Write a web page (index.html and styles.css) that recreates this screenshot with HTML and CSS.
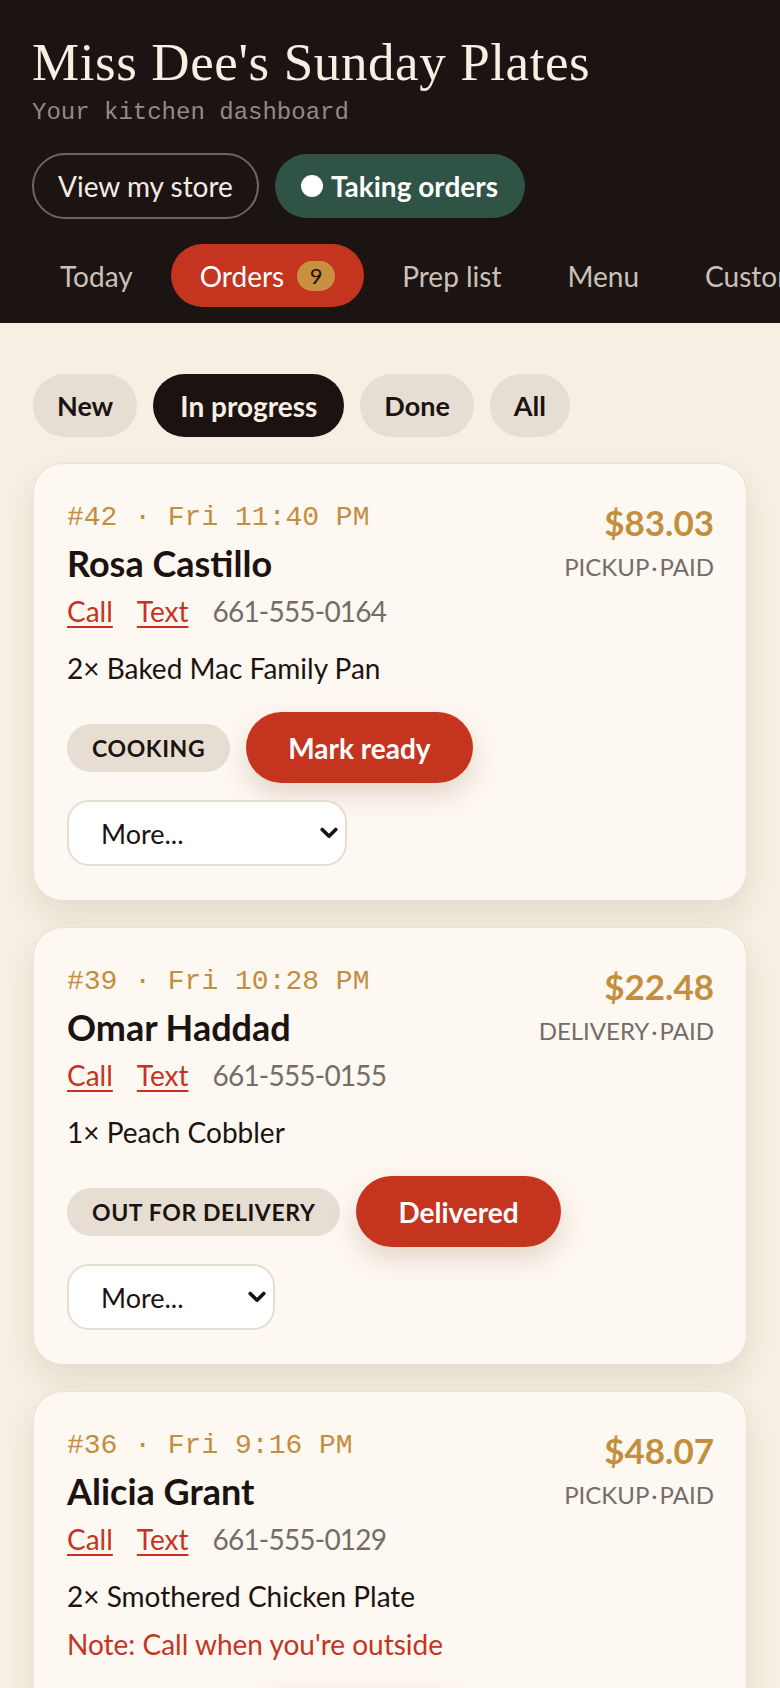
FILE: index.html
```html
<!DOCTYPE html>
<html lang="en">
<head>
<meta charset="utf-8">
<title>Miss Dee's Sunday Plates — Dashboard</title>
<link rel="stylesheet" href="styles.css">
</head>
<body>
<header class="header">
  <h1 class="title">Miss Dee's Sunday Plates</h1>
  <p class="subtitle">Your kitchen dashboard</p>
  <div class="header-actions">
    <a class="btn-outline" href="#">View my store</a>
    <button class="btn-open" type="button"><span class="dot"></span>Taking orders</button>
  </div>
  <nav class="nav">
    <a class="nav-item" href="#">Today</a>
    <a class="nav-item active" href="#">Orders <span class="badge">9</span></a>
    <a class="nav-item" href="#">Prep list</a>
    <a class="nav-item" href="#">Menu</a>
    <a class="nav-item" href="#">Customers</a>
  </nav>
</header>

<main class="main">
  <div class="filters">
    <button class="chip" type="button">New</button>
    <button class="chip active" type="button">In progress</button>
    <button class="chip" type="button">Done</button>
    <button class="chip" type="button">All</button>
  </div>

  <section class="cards">
    <article class="card">
      <div class="card-head">
        <div class="card-main">
          <div class="meta">#42 · Fri 11:40 PM</div>
          <h2 class="name">Rosa Castillo</h2>
          <div class="contact"><a href="#">Call</a><a href="#">Text</a><span class="phone">661-555-0164</span></div>
          <div class="items">2× Baked Mac Family Pan</div>
        </div>
        <div class="card-side">
          <div class="price">$83.03</div>
          <div class="kind">PICKUP<span class="sep">·</span>PAID</div>
        </div>
      </div>
      <div class="actions">
        <span class="status">COOKING</span>
        <button class="btn-primary" type="button">Mark ready</button>
      </div>
      <div class="select-wrap sel-wide">
        <select class="more"><option>More...</option><option>Mark picked up</option><option>Cancel order</option></select>
        <svg class="chev" viewBox="0 0 18 12" aria-hidden="true"><path d="M2.2 2.4 9 9.2 15.8 2.4" fill="none" stroke="#1c1311" stroke-width="3.6" stroke-linecap="round" stroke-linejoin="round"/></svg>
      </div>
    </article>

    <article class="card">
      <div class="card-head">
        <div class="card-main">
          <div class="meta">#39 · Fri 10:28 PM</div>
          <h2 class="name">Omar Haddad</h2>
          <div class="contact"><a href="#">Call</a><a href="#">Text</a><span class="phone">661-555-0155</span></div>
          <div class="items">1× Peach Cobbler</div>
        </div>
        <div class="card-side">
          <div class="price">$22.48</div>
          <div class="kind">DELIVERY<span class="sep">·</span>PAID</div>
        </div>
      </div>
      <div class="actions">
        <span class="status">OUT FOR DELIVERY</span>
        <button class="btn-primary" type="button">Delivered</button>
      </div>
      <div class="select-wrap sel-narrow">
        <select class="more"><option>More...</option><option>Refund</option></select>
        <svg class="chev" viewBox="0 0 18 12" aria-hidden="true"><path d="M2.2 2.4 9 9.2 15.8 2.4" fill="none" stroke="#1c1311" stroke-width="3.6" stroke-linecap="round" stroke-linejoin="round"/></svg>
      </div>
    </article>

    <article class="card">
      <div class="card-head">
        <div class="card-main">
          <div class="meta">#36 · Fri 9:16 PM</div>
          <h2 class="name">Alicia Grant</h2>
          <div class="contact"><a href="#">Call</a><a href="#">Text</a><span class="phone">661-555-0129</span></div>
          <div class="items">2× Smothered Chicken Plate</div>
          <div class="note">Note: Call when you're outside</div>
        </div>
        <div class="card-side">
          <div class="price">$48.07</div>
          <div class="kind">PICKUP<span class="sep">·</span>PAID</div>
        </div>
      </div>
      <div class="actions">
        <span class="status">COOKING</span>
        <button class="btn-primary" type="button">Mark ready</button>
      </div>
      <div class="select-wrap sel-wide">
        <select class="more"><option>More...</option></select>
        <svg class="chev" viewBox="0 0 18 12" aria-hidden="true"><path d="M2.2 2.4 9 9.2 15.8 2.4" fill="none" stroke="#1c1311" stroke-width="3.6" stroke-linecap="round" stroke-linejoin="round"/></svg>
      </div>
    </article>
  </section>
</main>
</body>
</html>
```

FILE: styles.css
```css
* { box-sizing: border-box; }

body {
  margin: 0;
  background: #f6efe3;
  font-family: Lato, "Noto Sans", sans-serif;
  color: #1c1311;
}

a { color: inherit; text-decoration: none; }
button { font-family: inherit; border: 0; cursor: pointer; }

/* Header */
.header {
  background: #1c1412;
  padding: 32px 0 16px 32px;
  overflow: hidden;
}
.title {
  margin: 0;
  font-family: "Liberation Serif", "DejaVu Serif", serif;
  font-weight: 400;
  font-size: 53px;
  line-height: 60px;
  letter-spacing: 0.6px;
  color: #f7efe2;
}
.subtitle {
  margin: 5px 0 0;
  font-family: "Liberation Mono", "DejaVu Sans Mono", monospace;
  font-size: 24px;
  line-height: 32px;
  color: #948a83;
}
.header-actions {
  display: flex;
  align-items: center;
  gap: 16px;
  margin-top: 24px;
}
.btn-outline {
  height: 66px;
  display: flex;
  align-items: center;
  padding: 0 24px;
  border: 2px solid #6f6560;
  border-radius: 33px;
  font-size: 28px;
  color: #f3ece2;
}
.btn-open {
  height: 64px;
  display: flex;
  align-items: center;
  gap: 8px;
  padding: 0 27px 0 26px;
  border-radius: 32px;
  background: #2f5446;
  color: #ffffff;
  font-size: 28px;
  font-weight: 700;
}
.dot {
  width: 22px;
  height: 22px;
  border-radius: 50%;
  background: #ffffff;
}

.nav {
  display: flex;
  gap: 10px;
  margin-top: 25px;
  white-space: nowrap;
}
.nav-item {
  flex-shrink: 0;
  height: 63px;
  display: flex;
  align-items: center;
  gap: 13px;
  padding: 0 28px;
  border-radius: 32px;
  font-size: 28px;
  color: #cbc1b9;
}
.nav-item.active {
  background: #c4341f;
  color: #ffffff;
  padding: 0 29px;
}
.badge {
  width: 38px;
  height: 30px;
  border-radius: 15px;
  background: #c8913f;
  color: #1c1311;
  font-size: 22px;
  display: flex;
  align-items: center;
  justify-content: center;
}

/* Main */
.main {
  padding: 51px 33px 40px;
}
.filters {
  display: flex;
  gap: 16px;
}
.chip {
  height: 63px;
  padding: 0 24px;
  border-radius: 32px;
  background: #e7ded3;
  color: #1c1311;
  font-size: 27px;
  font-weight: 700;
}
.chip.active {
  background: #1c1311;
  color: #f7efe2;
  padding: 0 27px;
  font-size: 28px;
}

.cards {
  margin-top: 26px;
  display: flex;
  flex-direction: column;
  gap: 26px;
}
.card {
  background: #fdf8f1;
  border: 1px solid #ebe1d5;
  border-radius: 30px;
  padding: 34px 32px 34px 33px;
  box-shadow: 0 14px 32px rgba(70, 45, 20, 0.10);
}
.card-head {
  display: flex;
  justify-content: space-between;
  align-items: flex-start;
}
.meta {
  font-family: "Liberation Mono", "DejaVu Sans Mono", monospace;
  font-size: 28px;
  line-height: 40px;
  color: #c38e3e;
}
.name {
  margin: 5px 0 0;
  font-size: 36px;
  line-height: 40px;
  font-weight: 700;
  color: #1c1311;
}
.contact {
  margin-top: 10px;
  display: flex;
  gap: 24px;
  font-size: 28px;
  line-height: 36px;
}
.contact a {
  color: #c4341f;
  text-decoration: underline;
  text-underline-offset: 4px;
  text-decoration-thickness: 2px;
}
.phone {
  color: #756c67;
  letter-spacing: -0.8px;
}
.items {
  margin-top: 21px;
  font-size: 28px;
  line-height: 36px;
}
.note {
  margin-top: 12px;
  font-size: 28px;
  line-height: 36px;
  color: #c4341f;
}
.card-side {
  text-align: right;
}
.price {
  margin-top: 1px;
  font-size: 35px;
  line-height: 46px;
  font-weight: 700;
  color: #c38e3e;
}
.kind {
  margin-top: 6px;
  font-size: 24px;
  line-height: 32px;
  color: #756c67;
}
.sep { margin: 0 2px; }

.actions {
  margin-top: 26px;
  display: flex;
  align-items: center;
  gap: 16px;
}
.status {
  height: 48px;
  display: flex;
  align-items: center;
  padding: 0 25px;
  border-radius: 24px;
  background: #e7ded3;
  font-size: 23px;
  letter-spacing: 0.6px;
  font-weight: 700;
  color: #1c1311;
}
.btn-primary {
  height: 71px;
  padding: 0 42px;
  border-radius: 36px;
  background: #c4341f;
  color: #ffffff;
  font-size: 28px;
  font-weight: 700;
  box-shadow: 0 12px 26px rgba(120, 60, 30, 0.18);
}

.select-wrap {
  position: relative;
  margin-top: 17px;
  height: 66px;
}
.sel-wide { width: 280px; }
.sel-narrow { width: 208px; }
.more {
  appearance: none;
  -webkit-appearance: none;
  width: 100%;
  height: 66px;
  padding: 0 40px 0 32px;
  border: 2px solid #e6ddd2;
  border-radius: 22px;
  background: #ffffff;
  font-family: inherit;
  font-size: 27px;
  color: #1c1311;
}
.chev {
  position: absolute;
  right: 9px;
  top: 27px;
  width: 18px;
  height: 12px;
  pointer-events: none;
}
```
